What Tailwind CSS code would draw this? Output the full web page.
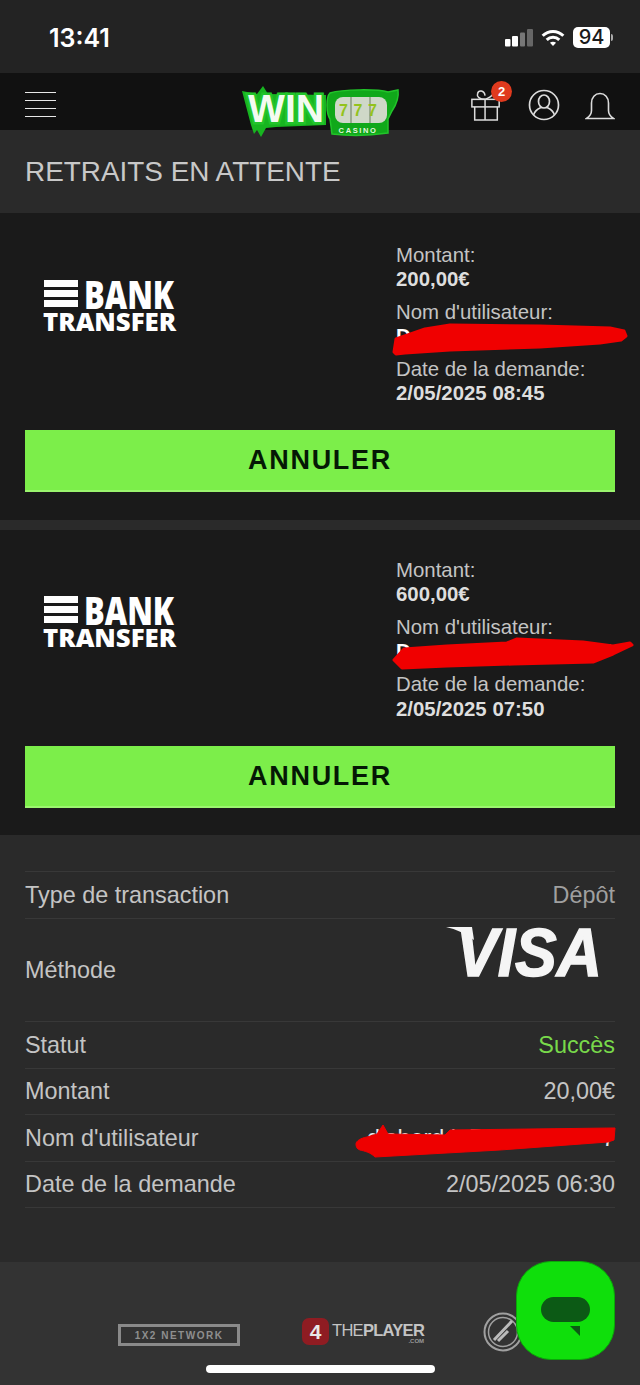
<!DOCTYPE html>
<html lang="fr">
<head>
  <meta charset="UTF-8" />
  <meta name="viewport" content="width=device-width, initial-scale=1.0"/>
  <title>Retraits en attente - Win777</title>
  <script src="https://cdn.jsdelivr.net/npm/@tailwindcss/browser@4"></script>
</head>
<body class="bg-[#2a2a2a] font-['Liberation_Sans',sans-serif] text-[#d8d8d8]">
<div class="relative w-[640px] h-[1385px] overflow-hidden">

  <!-- status bar -->
  <div class="h-[73px] bg-[#232323] flex items-center justify-between pl-[49px] pr-[27px] pt-[4px]">
    <span class="font-['Inter',sans-serif] text-[25px] font-semibold text-white">13:41</span>
    <div class="flex items-center -mt-[2px]">
      <svg width="28" height="18" viewBox="0 0 28 18" fill="#fff" class="mr-[8px]">
        <rect x="0" y="10" width="5.500" height="7.500" rx="1"/>
        <rect x="7" y="7" width="6" height="10.500" rx="1"/>
        <rect x="15" y="3.500" width="5" height="14" rx="1" fill="#777"/>
        <rect x="22" y="0" width="6" height="17.500" rx="1" fill="#666"/>
      </svg>
      <svg width="24" height="18" viewBox="0 0 26 20" fill="none" stroke="#fff" stroke-width="3.400" class="mr-[8px]">
        <path d="M1.500 7.500C8 1.200 18 1.200 24.500 7.500"/>
        <path d="M6 12c4-3.800 10-3.800 14 0"/>
        <path d="M13 19l-3.400-3.600c2-1.600 4.800-1.600 6.800 0z" fill="#fff" stroke="none"/>
      </svg>
      <div class="flex items-center gap-px">
        <span class="w-[37px] h-[21px] rounded-[5px] bg-white text-[#1a1a1a] text-[20px] font-['Inter',sans-serif] font-medium leading-[21px] text-center">94</span>
        <span class="w-[2px] h-[7px] bg-[#aaa] rounded-r-sm"></span>
      </div>
    </div>
  </div>

  <!-- top navigation -->
  <header class="relative h-[57px] bg-[#111111] flex items-center justify-between px-[25px] pt-[6px]">
    <div class="flex flex-col gap-[7px]">
      <span class="w-[31px] h-px bg-[#e8e8e8]"></span>
      <span class="w-[31px] h-px bg-[#e8e8e8]"></span>
      <span class="w-[31px] h-px bg-[#e8e8e8]"></span>
      <span class="w-[31px] h-px bg-[#e8e8e8]"></span>
    </div>

    <!-- casino logo hangs over the title band -->
    <svg class="absolute left-[238px] top-[10px]" width="164" height="56" viewBox="0 0 164 56">
      <path d="M4 8l15 3 6-8 5 8 58 1 0 30-50 2-10 1-5 9-4-7-3 4-3-9z" fill="#17b520"/>
      <text x="10" y="39" font-family="Liberation Sans" font-weight="700" font-size="39" fill="#f4fbf0" stroke="#22c42a" stroke-width="5" paint-order="stroke" textLength="76" lengthAdjust="spacingAndGlyphs">WIN</text>
      <path d="M92 10c13-4 48-4 58-1l10-2c1 7-2 15-6 21l-4 8v14c-20 3-40 3-56 1l-2-15c-4-6-4-22 0-26z" fill="#10a81a" stroke="#22c42a" stroke-width="1.500"/>
      <rect x="97" y="14" width="52" height="26" rx="8" fill="#cfd8c8"/>
      <path d="M113 14v26M132 14v26" stroke="#8b9a80" stroke-width="1.500"/>
      <text x="120" y="33" text-anchor="middle" font-family="Liberation Sans" font-weight="700" font-size="16" fill="#93c31c" textLength="38">777</text>
      <text x="120" y="50" text-anchor="middle" font-family="Liberation Sans" font-weight="700" font-size="7.500" fill="#e2f7de" letter-spacing="1.600">CASINO</text>
    </svg>

    <div class="flex items-center">
      <div class="relative mr-[26px]">
        <svg width="32" height="32" viewBox="0 0 32 34" fill="none" stroke="#dcdcdc" stroke-width="1.600" class="block">
          <rect x="1" y="11" width="29" height="8"/>
          <path d="M4 19v14h24V19M15 11v22"/>
          <path d="M15 11c-6 0-9-3-8-6 1-4 7-4 8 2M15 11c3-1 7-3 9-6"/>
        </svg>
        <span class="absolute left-[21px] -top-[8px] w-[21px] h-[21px] rounded-full bg-[#e03a1e] text-white text-[13px] font-bold leading-[21px] text-center">2</span>
      </div>
      <svg width="32" height="32" viewBox="0 0 32 32" fill="none" stroke="#dcdcdc" stroke-width="1.700" class="mr-[25px]">
        <circle cx="16" cy="16" r="14.500"/>
        <ellipse cx="16" cy="12.500" rx="5.500" ry="6.500"/>
        <path d="M5.500 26c1.500-5 5.500-6.500 7.500-7.500M26.500 26c-1.500-5-5.500-6.500-7.500-7.500"/>
      </svg>
      <svg width="30" height="28" viewBox="0 0 30 28" fill="none" stroke="#dcdcdc" stroke-width="1.600" class="mt-[3px]">
        <path d="M1.500 26.500c3-2 5-4 5-8V11c0-5.500 3.500-9.500 8.500-9.500S23.500 5.500 23.500 11v7.500c0 4 2 6 5 8z"/>
      </svg>
    </div>
  </header>

  <!-- page title -->
  <div class="h-[83px] bg-[#2a2a2a] flex items-center pl-[25px]">
    <h1 class="text-[27.900px] text-[#c8c8c8] leading-none">RETRAITS EN ATTENTE</h1>
  </div>

  <!-- pending withdrawal: 200 -->
  <section class="relative h-[307px] bg-[#1a1a1a] px-[25px]">
    <div class="flex h-[217px]">
      <div class="w-[371px] pl-[19px] pt-[67px]">
        <div class="w-[134px] text-white font-['Open_Sans',sans-serif] font-extrabold">
          <div class="flex items-center h-[27px]">
            <div class="flex flex-col gap-[3px] w-[34px] shrink-0 mr-[6px]">
              <span class="h-[7px] bg-white"></span><span class="h-[7px] bg-white"></span><span class="h-[7px] bg-white"></span>
            </div>
            <span class="text-[39px] leading-[27px] scale-x-[0.79] origin-left">BANK</span>
          </div>
          <div class="mt-[5px] -ml-px text-[25px] leading-[18px] scale-x-[1.03] origin-left whitespace-nowrap">TRANSFER</div>
        </div>
      </div>
      <dl class="pt-[30px] text-[20.400px] leading-[25px] w-[219px]">
        <dt class="text-[#c4c4c4]">Montant:</dt>
        <dd class="font-bold mb-[8px] -mt-px text-[#dedede]">200,00€</dd>
        <dt class="text-[#c4c4c4]">Nom d'utilisateur:</dt>
        <dd class="font-bold mb-[8px] -mt-px text-white flex justify-between pr-[4px]"><span>D</span><span>!</span></dd>
        <dt class="text-[#c4c4c4]">Date de la demande:</dt>
        <dd class="font-bold -mt-px text-[#dedede]">2/05/2025 08:45</dd>
      </dl>
    </div>
    <button class="w-full h-[62px] bg-[#7cee4a] text-[#051805] text-[27px] font-bold tracking-[1.700px] border-b-2 border-[#9bf56e]">ANNULER</button>
    <svg class="absolute left-[390px] top-[107px]" width="240" height="38" viewBox="0 0 240 38">
      <path d="M4 32L6 19 35 9 60 5 150 6 220 8 234 11 236 16 231 20 210 23 150 27 60 30 15 33 6 34z" fill="#f00000" stroke="#f00000" stroke-width="3" stroke-linejoin="round"/>
    </svg>
  </section>

  <div class="h-[10px] bg-[#2a2a2a]"></div>

  <!-- pending withdrawal: 600 -->
  <section class="relative h-[305px] bg-[#1a1a1a] px-[25px]">
    <div class="flex h-[216px]">
      <div class="w-[371px] pl-[19px] pt-[66px]">
        <div class="w-[134px] text-white font-['Open_Sans',sans-serif] font-extrabold">
          <div class="flex items-center h-[27px]">
            <div class="flex flex-col gap-[3px] w-[34px] shrink-0 mr-[6px]">
              <span class="h-[7px] bg-white"></span><span class="h-[7px] bg-white"></span><span class="h-[7px] bg-white"></span>
            </div>
            <span class="text-[39px] leading-[27px] scale-x-[0.79] origin-left">BANK</span>
          </div>
          <div class="mt-[5px] -ml-px text-[25px] leading-[18px] scale-x-[1.03] origin-left whitespace-nowrap">TRANSFER</div>
        </div>
      </div>
      <dl class="pt-[28px] text-[20.400px] leading-[25px] w-[219px]">
        <dt class="text-[#c4c4c4]">Montant:</dt>
        <dd class="font-bold mb-[8px] text-[#dedede] -mt-px">600,00€</dd>
        <dt class="text-[#c4c4c4]">Nom d'utilisateur:</dt>
        <dd class="font-bold mb-[8px] -mt-px text-white flex justify-between pr-[4px]"><span>D</span><span>27</span></dd>
        <dt class="text-[#c4c4c4]">Date de la demande:</dt>
        <dd class="font-bold text-[#dedede]">2/05/2025 07:50</dd>
      </dl>
    </div>
    <button class="w-full h-[62px] bg-[#7cee4a] text-[#051805] text-[27px] font-bold tracking-[1.700px] border-b-2 border-[#9bf56e]">ANNULER</button>
    <svg class="absolute left-[390px] top-[105px]" width="250" height="38" viewBox="0 0 250 38">
      <path d="M4 25L14 14 57 11 117 8 127 4 193 7 223 11 240 8 242 10 223 19 203 27 123 29 57 31 12 33z" fill="#f00000" stroke="#f00000" stroke-width="3" stroke-linejoin="round"/>
    </svg>
  </section>

  <!-- last transaction details -->
  <section class="relative h-[427px] bg-[#2a2a2a] px-[25px] pt-[36px] text-[23.400px] text-[#c4c4c4]">
    <div class="border-t border-[#383838]">
      <div class="h-[47px] pt-[2px] flex items-center justify-between border-b border-[#383838]">
        <span>Type de transaction</span><span class="text-[#a0a0a0]">Dépôt</span>
      </div>
      <div class="h-[103px] pt-[2px] flex items-center justify-between border-b border-[#383838]">
        <span>Méthode</span>
        <svg class="self-start -mt-[9px] mr-[15px] overflow-visible" width="154" height="80" viewBox="0 -14 154 80">
          <text x="10" y="50" font-family="Liberation Sans" font-weight="700" font-style="italic" font-size="68" fill="#f5f5f5" stroke="#f5f5f5" stroke-width="1.500" textLength="146" lengthAdjust="spacingAndGlyphs">VISA</text>
          <path d="M0 1L26 1 28 14C20 8 10 3 0 1z" fill="#f5f5f5"/>
        </svg>
      </div>
      <div class="h-[47px] pt-[2px] flex items-center justify-between border-b border-[#383838]">
        <span>Statut</span><span class="text-[#78d94a]">Succès</span>
      </div>
      <div class="h-[46px] pt-[1px] flex items-center justify-between border-b border-[#383838]">
        <span>Montant</span><span>20,00€</span>
      </div>
      <div class="h-[47px] pt-[2px] flex items-center justify-between border-b border-[#383838]">
        <span>Nom d'utilisateur</span><span class="text-[#e8e8e8] w-[248px] flex justify-between"><span>d'abord l. D</span><span>7</span></span>
      </div>
      <div class="h-[46px] pt-[1px] flex items-center justify-between border-b border-[#383838]">
        <span>Date de la demande</span><span>2/05/2025 06:30</span>
      </div>
    </div>
    <svg class="absolute left-[350px] top-[285px]" width="270" height="40" viewBox="0 0 270 40">
      <path d="M6 24C6 21 11 18 17 17L27 14 33 5 38 14 95 15 100 10 262 8 265 8 264 20 258 22 150 30 25 37C20 32 14 31 10 30 7 29 6 27 6 24z" fill="#ee0000" stroke="#ee0000"/>
    </svg>
  </section>

  <!-- provider logos -->
  <footer class="h-[123px] bg-[#333333] flex items-start pl-[118px] pt-[62px]">
    <div class="w-[122px] h-[22px] shrink-0 border-[3px] border-[#8a8a8a] flex items-center justify-center text-[10px] font-bold tracking-[1.500px] text-[#8f8f8f]">1X2 NETWORK</div>
    <div class="flex items-center ml-[62px] -mt-[6px] w-[181px] shrink-0">
      <span class="w-[27px] h-[27px] rounded-[7px] bg-[#8f1c22] flex items-center justify-center text-[21px] font-bold text-[#e8e8e8]">4</span>
      <div class="ml-[3px] text-[#c4c4c4] leading-none">
        <div class="text-[16.500px] tracking-[-0.700px] whitespace-nowrap mt-[3px]">THE<span class="font-bold">PLAYER</span></div>
        <div class="text-[6px] text-right font-bold text-[#999]">.COM</div>
      </div>
    </div>
    <svg class="-mt-[12px] shrink-0" width="40" height="40" viewBox="0 0 40 40" fill="none" stroke="#a0a0a0">
      <circle cx="20" cy="20" r="18.500" stroke-width="2"/>
      <circle cx="20" cy="20" r="14.500" stroke-width="1.500"/>
      <path d="M11 28L29 9M15 29l10-10" stroke-width="3" stroke="#bbb"/>
    </svg>
  </footer>

  <!-- chat launcher -->
  <button class="absolute left-[516px] top-[1261px] w-[99px] h-[99px] rounded-[35px] bg-[#0fdf0b] border border-[#0aa808] flex items-center justify-center">
    <svg width="49" height="39" viewBox="0 0 49 39" class="mt-[11px]">
      <rect x="0" y="0" width="49" height="25" rx="12.500" fill="#0c5a15"/>
      <path d="M29 29h10v10z" fill="#0c5a15"/>
    </svg>
  </button>

  <!-- home indicator -->
  <div class="absolute left-[206px] top-[1365px] w-[229px] h-[8px] rounded-full bg-white"></div>
</div>
</body>
</html>
